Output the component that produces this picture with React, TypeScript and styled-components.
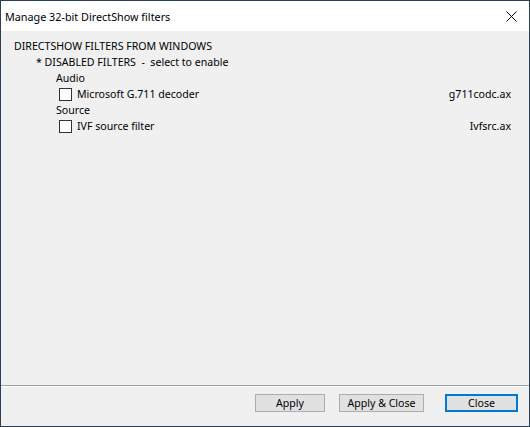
import styled, { createGlobalStyle } from "styled-components";

const GlobalStyle = createGlobalStyle`
  html, body {
    margin: 0;
    padding: 0;
    background: #ffffff;
  }
  * {
    box-sizing: border-box;
  }
`;

const Window = styled.div`
  width: 530px;
  height: 427px;
  border: 1px solid #2b3f57;
  display: flex;
  flex-direction: column;
  background: #f0f0f0;
  font-family: "Noto Sans", "Liberation Sans", sans-serif;
  font-size: 10.6px;
  color: #000;
`;

const TitleBar = styled.div`
  height: 30px;
  background: #ffffff;
  display: flex;
  align-items: center;
  justify-content: space-between;
  padding: 0 12px 0 4px;
  font-size: 10.8px;
`;

const CloseIcon = styled.svg`
  width: 11px;
  height: 11px;
`;

const Content = styled.div`
  flex: 1;
  padding: 7px 18px 0 12px;
  border-bottom: 1px solid #a0a0a0;
  box-shadow: 0 1px 0 #ffffff;
`;

const Row = styled.div<{ $indent: number }>`
  height: 16px;
  display: flex;
  align-items: center;
  padding-left: ${(p) => p.$indent}px;
  white-space: nowrap;
`;

const Box = styled.span`
  width: 13px;
  height: 13px;
  border: 1px solid #333333;
  background: #ffffff;
  margin-right: 5px;
  flex: none;
`;

const FileName = styled.span`
  margin-left: auto;
`;

const Footer = styled.div`
  height: 40px;
  display: flex;
  justify-content: flex-end;
  align-items: center;
  gap: 14px;
  padding: 0 11px 6px 0;
`;

const Button = styled.button<{ $width: number; $focused?: boolean }>`
  width: ${(p) => p.$width}px;
  height: 18px;
  padding: 0;
  font-family: inherit;
  font-size: 10.6px;
  color: #000;
  background: #e1e1e1;
  border: ${(p) => (p.$focused ? "2px solid #0078d7" : "1px solid #adadad")};
  margin-left: ${(p) => (p.$focused ? 7 : 0)}px;
`;

const filters = [
  { group: "Audio", name: "Microsoft G.711 decoder", file: "g711codc.ax" },
  { group: "Source", name: "IVF source filter", file: "Ivfsrc.ax" },
];

export default function App() {
  return (
    <>
      <GlobalStyle />
      <Window>
        <TitleBar>
          <span>Manage 32-bit DirectShow filters</span>
          <CloseIcon viewBox="0 0 11 11">
            <path d="M0.5 0.5 L10.5 10.5 M10.5 0.5 L0.5 10.5" stroke="#000" strokeWidth="1" />
          </CloseIcon>
        </TitleBar>
        <Content>
          <Row $indent={1}>DIRECTSHOW FILTERS FROM WINDOWS</Row>
          <Row $indent={23}>* DISABLED FILTERS&nbsp; - &nbsp;select to enable</Row>
          {filters.map((f) => (
            <div key={f.name}>
              <Row $indent={43}>{f.group}</Row>
              <Row $indent={46}>
                <Box />
                {f.name}
                <FileName>{f.file}</FileName>
              </Row>
            </div>
          ))}
        </Content>
        <Footer>
          <Button $width={70}>Apply</Button>
          <Button $width={85}>Apply &amp; Close</Button>
          <Button $width={73} $focused>Close</Button>
        </Footer>
      </Window>
    </>
  );
}
